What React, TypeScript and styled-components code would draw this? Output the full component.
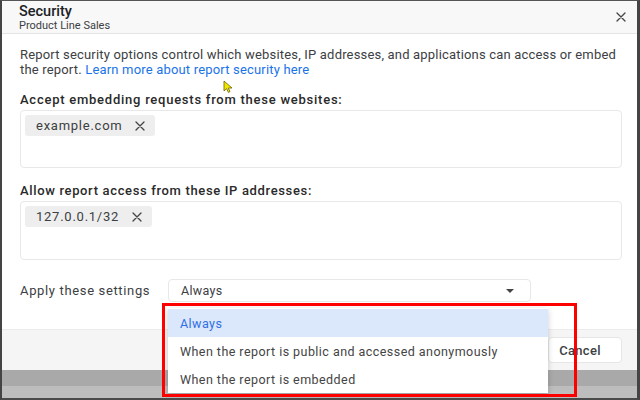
import styled, { createGlobalStyle } from "styled-components";

const GlobalStyle = createGlobalStyle`
  html, body {
    margin: 0;
    padding: 0;
    background: #ffffff;
  }
  body {
    font-family: Roboto, "Liberation Sans", Arial, sans-serif;
  }
  * {
    box-sizing: border-box;
  }
`;

const Frame = styled.div`
  position: relative;
  width: 640px;
  height: 400px;
  display: flex;
  flex-direction: column;
  overflow: hidden;
  background: #ffffff;
  border-top: 1px solid #555555;
  border-left: 2px solid #444444;
  border-right: 3px solid #444444;
  border-bottom: 2px solid #4a4a4a;
`;

const Header = styled.div`
  height: 33px;
  flex: none;
  display: flex;
  align-items: flex-start;
  justify-content: space-between;
  padding: 3px 10px 0 17px;
  background: #f8f8f8;
  border-bottom: 1px solid #e4e4e4;
`;

const TitleBlock = styled.div`
  display: flex;
  flex-direction: column;
`;

const Title = styled.span`
  font-size: 14.5px;
  line-height: 16px;
  font-weight: 500;
  color: #202124;
`;

const Subtitle = styled.span`
  font-size: 11px;
  line-height: 12px;
  color: #3c4043;
`;

const CloseBtn = styled.div`
  margin-top: 7px;
  width: 12px;
  height: 12px;
  display: flex;
  align-items: center;
  justify-content: center;
`;

const Body = styled.div`
  flex: none;
  padding: 13px 13px 0 18px;
  display: flex;
  flex-direction: column;
`;

const Intro = styled.div`
  font-size: 13px;
  line-height: 15px;
  letter-spacing: 0.18px;
  color: #3c4043;
`;

const IntroLine = styled.div`
  white-space: nowrap;
`;

const Link = styled.a`
  color: #1a73e8;
  text-decoration: none;
`;

const Label = styled.div<{ $gap: number; $spacing: number }>`
  margin-top: ${(p) => p.$gap}px;
  font-size: 13px;
  line-height: 16px;
  font-weight: 500;
  letter-spacing: ${(p) => p.$spacing}px;
  color: #2a2a2a;
`;

const TagBox = styled.div<{ $h: number }>`
  margin-top: 2px;
  margin-right: 2px;
  height: ${(p) => p.$h}px;
  padding: 4px;
  border: 1px solid #e8e8e8;
  border-radius: 4px;
  display: flex;
  align-items: flex-start;
  gap: 6px;
`;

const Chip = styled.div<{ $w: number }>`
  width: ${(p) => p.$w}px;
  height: 21px;
  padding: 0 10px 0 11px;
  display: flex;
  align-items: center;
  justify-content: space-between;
  background: #eeeeee;
  border-radius: 3px;
  font-size: 13px;
  letter-spacing: 0.75px;
  color: #3c4043;
`;

const ApplyRow = styled.div`
  margin-top: 19px;
  display: flex;
  align-items: center;
`;

const ApplyLabel = styled.span`
  width: 148px;
  font-size: 13px;
  letter-spacing: 0.65px;
  color: #3c4043;
`;

const Select = styled.div`
  width: 363px;
  height: 23px;
  padding: 0 16px 0 12px;
  display: flex;
  align-items: center;
  justify-content: space-between;
  border: 1px solid #e8e8e8;
  border-radius: 4px;
  font-size: 12.5px;
  letter-spacing: 0.3px;
  color: #3c4043;
`;

const Footer = styled.div`
  margin-top: 27px;
  height: 41px;
  flex: none;
  display: flex;
  align-items: center;
  justify-content: flex-end;
  padding-right: 15px;
  background: #f5f5f5;
  border-top: 1px solid #ececec;
`;

const Button = styled.button`
  width: 74px;
  height: 26px;
  padding: 0 10px 0 0;
  border: 1px solid #e6e6e6;
  border-radius: 4px;
  background: #ffffff;
  font-family: inherit;
  font-size: 13px;
  font-weight: 500;
  letter-spacing: 0.3px;
  color: #3c4043;
`;

const Backdrop = styled.div`
  flex: 1;
  background: linear-gradient(#a9a9a9 0 16px, #bdbdbd 16px);
`;

const Menu = styled.div`
  position: absolute;
  left: 166px;
  top: 307px;
  width: 380px;
  padding-top: 1px;
  background: #ffffff;
  box-shadow: 0 2px 6px rgba(0, 0, 0, 0.2);
`;

const MenuItem = styled.div<{ $active?: boolean }>`
  height: 28px;
  padding-left: 12px;
  display: flex;
  align-items: center;
  font-size: 12.5px;
  letter-spacing: 0.45px;
  color: ${(p) => (p.$active ? "#2f6fe4" : "#444444")};
  background: ${(p) => (p.$active ? "#dbe7fb" : "transparent")};
`;

const Highlight = styled.div`
  position: absolute;
  left: 160px;
  top: 302px;
  width: 415px;
  height: 94px;
  border: 3px solid #ff0000;
  pointer-events: none;
`;

const Pointer = styled.div`
  position: absolute;
  left: 221px;
  top: 77px;
  width: 11px;
  height: 13px;
`;

const Cross = ({ size, color }: { size: number; color: string }) => (
  <svg width={size} height={size} viewBox="0 0 10 10">
    <path d="M1 1L9 9M9 1L1 9" stroke={color} strokeWidth="1.3" strokeLinecap="round" />
  </svg>
);

export default function App() {
  return (
    <>
      <GlobalStyle />
      <Frame>
        <Header>
          <TitleBlock>
            <Title>Security</Title>
            <Subtitle>Product Line Sales</Subtitle>
          </TitleBlock>
          <CloseBtn>
            <Cross size={10} color="#444" />
          </CloseBtn>
        </Header>
        <Body>
          <Intro>
            <IntroLine>
              Report security options control which websites, IP addresses, and applications can access or embed
            </IntroLine>
            <IntroLine>
              the report. <Link href="#">Learn more about report security here</Link>
            </IntroLine>
          </Intro>
          <Label $gap={15} $spacing={0.75}>Accept embedding requests from these websites:</Label>
          <TagBox $h={58}>
            <Chip $w={130}>
              example.com
              <Cross size={10} color="#444" />
            </Chip>
          </TagBox>
          <Label $gap={15} $spacing={0.65}>Allow report access from these IP addresses:</Label>
          <TagBox $h={59}>
            <Chip $w={127}>
              127.0.0.1/32
              <Cross size={10} color="#444" />
            </Chip>
          </TagBox>
          <ApplyRow>
            <ApplyLabel>Apply these settings</ApplyLabel>
            <Select>
              Always
              <svg width="8" height="4" viewBox="0 0 8 4">
                <path d="M0 0H8L4 4Z" fill="#444" />
              </svg>
            </Select>
          </ApplyRow>
        </Body>
        <Footer>
          <Button>Cancel</Button>
        </Footer>
        <Backdrop />
        <Menu>
          <MenuItem $active>Always</MenuItem>
          <MenuItem>When the report is public and accessed anonymously</MenuItem>
          <MenuItem>When the report is embedded</MenuItem>
        </Menu>
        <Highlight />
        <Pointer>
          <svg width="11" height="13" viewBox="0 0 11 13">
            <path d="M1 1L1 11L3.6 8.6L5.4 12.4L7 11.6L5.3 8H9Z" fill="#f2e600" stroke="#6b6200" strokeWidth="0.8" strokeLinejoin="round" />
          </svg>
        </Pointer>
      </Frame>
    </>
  );
}
